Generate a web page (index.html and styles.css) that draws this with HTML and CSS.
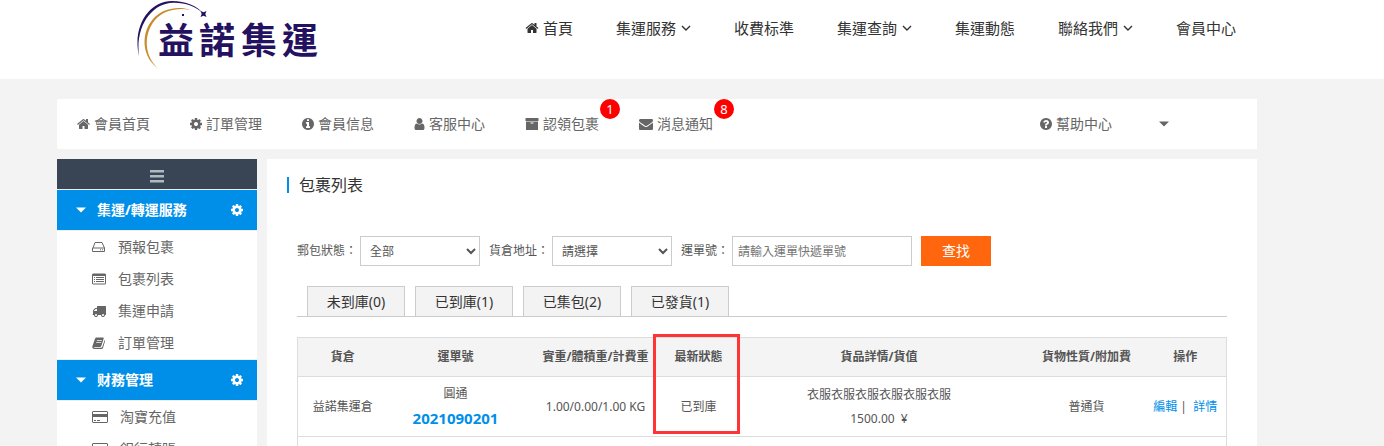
FILE: index.html
```html
<!DOCTYPE html>
<html lang="zh-Hant">
	<head>
		<meta charset="utf-8">
		<title>包裹列表</title>
		<link rel="stylesheet" href="styles.css">
	</head>
	<body>
		<!-- shared icons -->
		<svg class="sprite">
			<symbol id="home" viewBox="64 0 1664 1792"><path d="M1472 992v480q0 26-19 45t-45 19h-384v-384h-256v384h-384q-26 0-45-19t-19-45v-480q0-1 .5-3t.5-3l575-474 575 474q1 2 1 6zm223-69l-62 74q-8 9-21 11h-3q-13 0-21-7l-692-577-692 577q-12 8-24 7-13-2-21-11l-62-74q-8-10-7-23.5t11-21.5l719-599q32-26 76-26t76 26l244 204v-195q0-14 9-23t23-9h192q14 0 23 9t9 23v408l219 182q10 8 11 21.5t-7 23.5z"/></symbol>
			<symbol id="cog" viewBox="128 0 1536 1792"><path d="M1152 896q0-106-75-181t-181-75-181 75-75 181 75 181 181 75 181-75 75-181zm512-109v222q0 12-8 23t-20 13l-185 28q-19 54-39 91 35 50 107 138 10 12 10 25t-9 23q-27 37-99 108t-94 71q-12 0-26-9l-138-108q-44 23-91 38-16 136-29 186-7 28-36 28h-222q-14 0-24.5-8.5t-11.5-21.5l-28-184q-49-16-90-37l-141 107q-10 9-25 9-14 0-25-11-126-114-165-168-7-10-7-23 0-12 8-23 15-21 51-66.5t54-70.5q-27-50-41-99l-183-27q-13-2-21-12.5t-8-23.5v-222q0-12 8-23t19-13l186-28q14-46 39-92-40-57-107-138-10-12-10-24 0-10 9-23 26-36 98.5-107.5t94.5-71.5q13 0 26 10l138 107q44-23 91-38 16-136 29-186 7-28 36-28h222q14 0 24.5 8.5t11.5 21.5l28 184q49 16 90 37l142-107q9-9 24-9 13 0 25 10 129 119 165 170 7 8 7 22 0 12-8 23-15 21-51 66.5t-54 70.5q26 50 41 98l183 28q13 2 21 12.5t8 23.5z"/></symbol>
			<symbol id="info" viewBox="128 0 1536 1792"><path d="M1152 1376v-160q0-14-9-23t-23-9h-96v-512q0-14-9-23t-23-9h-320q-14 0-23 9t-9 23v160q0 14 9 23t23 9h96v320h-96q-14 0-23 9t-9 23v160q0 14 9 23t23 9h448q14 0 23-9t9-23zm-128-896v-160q0-14-9-23t-23-9h-192q-14 0-23 9t-9 23v160q0 14 9 23t23 9h192q14 0 23-9t9-23zm640 416q0 209-103 385.5t-279.5 279.5-385.5 103-385.5-103-279.5-279.5-103-385.5 103-385.5 279.5-279.5 385.5-103 385.5 103 279.5 279.5 103 385.5z"/></symbol>
			<symbol id="help" viewBox="128 0 1536 1792"><path d="M1024 1376v-192q0-14-9-23t-23-9h-192q-14 0-23 9t-9 23v192q0 14 9 23t23 9h192q14 0 23-9t9-23zm256-672q0-88-55.5-163t-138.5-116-170-41q-243 0-371 213-15 24 8 42l132 100q7 6 19 6 16 0 25-12 53-68 86-92 34-24 86-24 48 0 85.5 26t37.5 59q0 38-20 61t-68 45q-63 28-115.5 86.5t-52.5 125.5v36q0 14 9 23t23 9h192q14 0 23-9t9-23q0-19 21.5-49.5t54.5-49.5q32-18 49-28.5t46-35 44.5-48 28-60.5 12.5-81zm384 192q0 209-103 385.5t-279.5 279.5-385.5 103-385.5-103-279.5-279.5-103-385.5 103-385.5 279.5-279.5 385.5-103 385.5 103 279.5 279.5 103 385.5z"/></symbol>
			<symbol id="user" viewBox="192 0 1408 1792"><path d="M1536 1399q0 109-62.5 187t-150.5 78h-854q-88 0-150.5-78t-62.5-187q0-85 8.5-160.5t31.5-152 58.5-131 94-89 134.5-34.5q131 128 313 128t313-128q76 0 134.5 34.5t94 89 58.5 131 31.5 152 8.5 160.5zm-256-887q0 159-112.5 271.5t-271.5 112.5-271.5-112.5-112.5-271.5 112.5-271.5 271.5-112.5 271.5 112.5 112.5 271.5z"/></symbol>
			<symbol id="archive" viewBox="0 0 14 14"><path fill-rule="evenodd" d="M.5 1h13v3H.5zM1 4.5h12V13H1zM5.500 5.500v1h3v-1z"/></symbol>
			<symbol id="mail" viewBox="0 0 1792 1792"><path d="M1792 710v794q0 66-47 113t-113 47h-1472q-66 0-113-47t-47-113v-794q44 49 101 87 362 246 497 345 57 42 92.500 65.500t94.500 48 110 24.500h2q51 0 110-24.500t94.500-48 92.500-65.500q170-123 498-345 57-39 100-87zm0-294q0 79-49 151t-122 123q-376 261-468 325-10 7-42.500 31t-54 38.500-52 32.500-57.500 27-50 9h-2q-23 0-50-9t-57.500-27-52-32.500-54-38.500-42.500-31q-91-64-262-182.500t-205-142.500q-62-42-117-115.500t-55-136.500q0-78 41.500-130t118.500-52h1472q65 0 112.500 47t47.500 113z"/></symbol>
			<symbol id="down" viewBox="0 0 10 14"><path class="stroke" stroke-width="1.4" d="M1 5l4 4 4-4"/></symbol>
			<symbol id="caret" viewBox="0 0 10 14"><path d="M0 4.500h10L5 9.500z"/></symbol>
			<symbol id="bars" viewBox="0 0 14 14"><path d="M0 1h14v2.500H0zM0 6h14v2.500H0zM0 11h14v2.500H0z"/></symbol>
			<symbol id="hdd" viewBox="0 0 14 14"><path class="stroke" d="M1 8l2-5.500h7L12.500 8M.5 8h12v3.500H.5zM8 9.800h1M10 9.800h1"/></symbol>
			<symbol id="list" viewBox="0 0 14 14"><path fill-rule="evenodd" d="M1 1.500h12l1 1v9l-1 1H1l-1-1v-9zM1 4v7.500h12V4z"/><path d="M2 5h1v1H2zM4 5h8v1H4zM2 7h1v1H2zM4 7h8v1H4zM2 9h1v1H2zM4 9h8v1H4z"/></symbol>
			<symbol id="truck" viewBox="0 0 1792 1792"><path d="M640 1408q0-52-38-90t-90-38-90 38-38 90 38 90 90 38 90-38 38-90zm-384-512h384v-256h-158q-13 0-22 9l-195 195q-9 9-9 22v30zm1280 512q0-52-38-90t-90-38-90 38-38 90 38 90 90 38 90-38 38-90zm256-1088v1024q0 15-4 26.500t-13.500 18.500-16.500 11.500-23.500 6-22.500 2-25.500 0-22.500-.5q0 106-75 181t-181 75-181-75-75-181h-384q0 106-75 181t-181 75-181-75-75-181h-64q-3 0-22.500.5t-25.500 0-22.500-2-23.500-6-16.500-11.500-13.500-18.500-4-26.500q0-26 19-45t45-19v-320q0-8-.5-35t0-38 2.500-34.500 6.500-37 14-30.500 22.500-30l198-198q19-19 50.500-32t58.500-13h160v-192q0-26 19-45t45-19h1024q26 0 45 19t19 45z"/></symbol>
			<symbol id="book" viewBox="0 0 14 14"><path fill-rule="evenodd" d="M4.500 1.500H11q1 0 .7 1L9.300 10q-.3 1-1.300 1H2.500q-1 0-.3.800H9q1 0 1.300-.8L12.600 4q.7.300.4 1.200L11 12q-.3 1-1.500 1H2Q0 12.500.3 10.500L3 2.700q.4-1.200 1.500-1.200zM5 4l-.3.800h5L10 4zM4.400 6l-.3.800h5l.3-.8z"/></symbol>
			<symbol id="card" viewBox="0 0 16 14"><path fill-rule="evenodd" d="M1 1h14l1 1v10l-1 1H1l-1-1V2zM1 2v2h14V2zM1 7v5h14V7z"/><path d="M2 10h2v1H2zM5 10h3v1H5z"/></symbol>
		</svg>

		<header class="header">
			<a class="logo" href="#">
				<svg class="logo-img" viewBox="0 0 190 72" role="img" aria-label="益諾集運">
					<path fill="#241260" d="M3 56C-4 25 14 1 36 1C50 1 61 6 68 14C59 6 49 2.500 37 2.800C17 3 -1 25 3 56z"/>
					<path fill="#c98a2b" d="M23 69C6 58 4 34 17 19C27 8 43 6 54 10C42 7.500 28 10 19 20C7 34 8 57 23 69z"/>
					<path fill="#241260" d="M64.500 11l3 1.200L70.500 11l-1.200 3L70.500 17l-3-1.200L64.500 17l1.200-3zM46 14h2v2h-2z"/>
					<text class="logo-text" x="22" y="54">益</text>
					<text class="logo-text" x="63" y="54">諾</text>
					<text class="logo-text" x="105" y="54">集</text>
					<text class="logo-text" x="146" y="54">運</text>
				</svg>
			</a>
			<nav class="nav">
				<a href="#"><svg class="icon home-icon"><use href="#home"/></svg>首頁</a>
				<a href="#">集運服務<svg class="icon down"><use href="#down"/></svg></a>
				<a href="#">收費标準</a>
				<a href="#">集運查詢<svg class="icon down"><use href="#down"/></svg></a>
				<a href="#">集運動態</a>
				<a href="#">聯絡我們<svg class="icon down"><use href="#down"/></svg></a>
				<a href="#">會員中心</a>
			</nav>
		</header>

		<div class="wrap">
			<nav class="topbar">
				<a href="#"><svg class="icon w13"><use href="#home"/></svg>會員首頁</a>
				<a href="#"><svg class="icon w12"><use href="#cog"/></svg>訂單管理</a>
				<a href="#"><svg class="icon w12"><use href="#info"/></svg>會員信息</a>
				<a href="#"><svg class="icon w11"><use href="#user"/></svg>客服中心</a>
				<a href="#"><svg class="icon"><use href="#archive"/></svg>認領包裹<span class="badge">1</span></a>
				<a href="#"><svg class="icon"><use href="#mail"/></svg>消息通知<span class="badge">8</span></a>
				<a class="help" href="#"><svg class="icon w12"><use href="#help"/></svg>幫助中心</a>
				<button class="account" aria-label="帳戶"><svg class="icon w10"><use href="#caret"/></svg></button>
			</nav>

			<div class="body">
				<aside class="side">
					<button class="side-toggle" aria-label="選單"><svg class="icon"><use href="#bars"/></svg></button>
					<h3 class="side-head"><svg class="icon w10"><use href="#caret"/></svg><span>集運/轉運服務</span><svg class="icon w12"><use href="#cog"/></svg></h3>
					<ul class="side-list">
						<li><a href="#"><svg class="icon"><use href="#hdd"/></svg>預報包裹</a></li>
						<li><a href="#"><svg class="icon"><use href="#list"/></svg>包裹列表</a></li>
						<li><a href="#"><svg class="icon"><use href="#truck"/></svg>集運申請</a></li>
						<li><a href="#"><svg class="icon"><use href="#book"/></svg>訂單管理</a></li>
					</ul>
					<h3 class="side-head"><svg class="icon w10"><use href="#caret"/></svg><span>财務管理</span><svg class="icon w12"><use href="#cog"/></svg></h3>
					<ul class="side-list">
						<li><a href="#"><svg class="icon w16"><use href="#card"/></svg>淘寶充值</a></li>
						<li><a href="#"><svg class="icon w16"><use href="#card"/></svg>銀行轉賬</a></li>
					</ul>
				</aside>

				<main class="main">
					<h2 class="title">包裹列表</h2>
					<form class="filter">
						<label for="status">郵包狀態：</label>
						<select id="status"><option>全部</option></select>
						<label for="depot">貨倉地址：</label>
						<select id="depot"><option>請選擇</option></select>
						<label for="num">運單號：</label>
						<input id="num" type="text" placeholder="請輸入運單快遞單號">
						<button class="search" type="button">查找</button>
					</form>
					<div class="tabs">
						<a href="#">未到庫(0)</a>
						<a href="#">已到庫(1)</a>
						<a href="#">已集包(2)</a>
						<a href="#">已發貨(1)</a>
					</div>
					<div class="table-box">
						<table class="list">
							<thead>
								<tr>
									<th class="c-depot">貨倉</th>
									<th class="c-num">運單號</th>
									<th class="c-weight">實重/體積重/計費重</th>
									<th class="c-status">最新狀態</th>
									<th>貨品詳情/貨值</th>
									<th class="c-kind">貨物性質/附加費</th>
									<th class="c-op">操作</th>
								</tr>
							</thead>
							<tbody>
								<tr>
									<td>益諾集運倉</td>
									<td>圓通<br><a class="num" href="#">2021090201</a></td>
									<td>1.00/0.00/1.00 KG</td>
									<td>已到庫</td>
									<td>衣服衣服衣服衣服衣服衣服<br>1500.00 &nbsp;¥</td>
									<td>普通貨</td>
									<td><a href="#">編輯</a> | &nbsp;<a href="#">詳情</a></td>
								</tr>
								<tr>
									<td colspan="7"></td>
								</tr>
							</tbody>
						</table>
						<div class="mark"></div>
					</div>
				</main>
			</div>
		</div>
	</body>
</html>
```

FILE: styles.css
```css
* {
	box-sizing:border-box;
}
html {
	overflow:hidden;
}
body {
	margin:0;
	background:#f3f3f3;
	color:#555;
	font:12px/24px "Noto Sans","Noto Sans CJK TC",sans-serif;
}
a {
	color:inherit;
	text-decoration:none;
}
button,select,input {
	font:inherit;
	color:inherit;
}
button {
	border:0;
	padding:0;
	background:none;
	cursor:pointer;
}
.sprite {
	display:none;
}
.icon {
	width:14px;
	height:14px;
	fill:currentColor;
	flex:none;
}
.w10 {
	width:10px;
}
.w11 {
	width:11px;
}
.w12 {
	width:12px;
}
.w13 {
	width:13px;
}
.w16 {
	width:16px;
}
.stroke {
	fill:none;
	stroke:currentColor;
}

/* header */
.header {
	display:flex;
	height:79px;
	padding-left:136px;
	background:#fff;
}
.logo-img {
	display:block;
	width:190px;
	height:72px;
}
.logo-text {
	font:bold 36px "Noto Sans CJK TC",sans-serif;
	fill:#241260;
}
.nav {
	display:flex;
	gap:43px;
	margin-left:199px;
	height:56px;
	font-size:15px;
	color:#333;
}
.nav a {
	display:flex;
	align-items:center;
	white-space:nowrap;
}
.home-icon {
	margin-right:4px;
}
.down {
	width:10px;
	margin-left:5px;
}

/* member bar */
.wrap {
	max-width:1257px;
	padding:20px 0 0 57px;
}
.topbar {
	display:flex;
	height:50px;
	background:#fff;
	font-size:14px;
	color:#666;
}
.topbar a {
	position:relative;
	display:flex;
	align-items:center;
	gap:4px;
	padding:0 20px;
	white-space:nowrap;
}
.badge {
	position:absolute;
	top:0;
	right:-1px;
	width:20px;
	height:20px;
	border-radius:50%;
	background:#f00;
	color:#fff;
	font-size:13px;
	line-height:20px;
	text-align:center;
}
.topbar .help {
	margin-left:auto;
}
.account {
	display:flex;
	align-items:center;
	padding:0 88px 0 27px;
}

/* sidebar */
.body {
	display:flex;
	gap:10px;
	padding-top:10px;
}
.side {
	width:200px;
	flex:none;
	background:#fff;
	font-size:14px;
	color:#666;
}
.side-toggle {
	display:flex;
	align-items:center;
	justify-content:center;
	width:100%;
	height:30px;
	padding-top:4px;
	background:#394555;
	color:#aeb9c2;
}
.side-head {
	display:flex;
	align-items:center;
	height:42px;
	margin:0;
	padding:0 14px 0 19px;
	border:1px solid #eee;
	border-width:1px 0;
	background:#008fe8;
	color:#fff;
	font-size:14px;
}
.side-head span {
	flex:1;
	margin-left:11px;
}
.side-list {
	margin:0;
	padding:0;
	list-style:none;
}
.side-list a {
	display:flex;
	align-items:center;
	gap:12px;
	height:32px;
	padding-left:35px;
}

/* content */
.main {
	flex:1;
	min-width:0;
	padding:18px 30px 0;
	background:#fff;
}
.title {
	margin:0 0 43px -10px;
	padding-left:10px;
	border-left:2px solid #008fe8;
	color:#333;
	font-size:16px;
	font-weight:normal;
	line-height:16px;
}
.filter {
	display:flex;
	align-items:center;
	height:30px;
}
.filter label {
	margin-right:3px;
	white-space:nowrap;
}
.filter select,
.filter input {
	height:30px;
	margin-right:9px;
	border:1px solid #ccc;
	border-radius:0;
	background:#fff;
}
.filter select {
	width:120px;
	padding:0 0 0 5px;
}
.filter input {
	width:180px;
	padding:0 5px;
}
.filter input::placeholder {
	color:#757575;
}
.filter .search {
	width:70px;
	height:30px;
	background:#ff660d;
	color:#fff;
	font-size:14px;
}
.tabs {
	display:flex;
	gap:10px;
	margin-top:20px;
	padding-left:10px;
	border-bottom:1px solid #ccc;
	color:#333;
	font-size:14px;
	line-height:29px;
}
.tabs a {
	min-width:98px;
	border:1px solid #ccc;
	border-bottom:0;
	background:#f3f3f3;
	text-align:center;
}
.table-box {
	position:relative;
	margin-top:20px;
}
.list {
	width:100%;
	table-layout:fixed;
	border-collapse:collapse;
	border:1px solid #ddd;
	text-align:center;
}
.list th {
	height:39px;
	padding:0;
	background:#f4f4f4;
	white-space:nowrap;
}
.list td {
	height:58px;
	padding:5px 0 4px;
	border-top:1px solid #ddd;
}
.list td a {
	color:#008fe8;
}
.list .num {
	font-size:15px;
	font-weight:bold;
}
.c-depot {
	width:90px;
}
.c-num {
	width:136px;
}
.c-weight {
	width:144px;
}
.c-status {
	width:62px;
}
.c-kind {
	width:116px;
}
.c-op {
	width:82px;
}
/* highlight round the status column */
.mark {
	position:absolute;
	top:-3px;
	left:356px;
	width:87px;
	height:100px;
	border:3px solid #ff3535;
}
```
